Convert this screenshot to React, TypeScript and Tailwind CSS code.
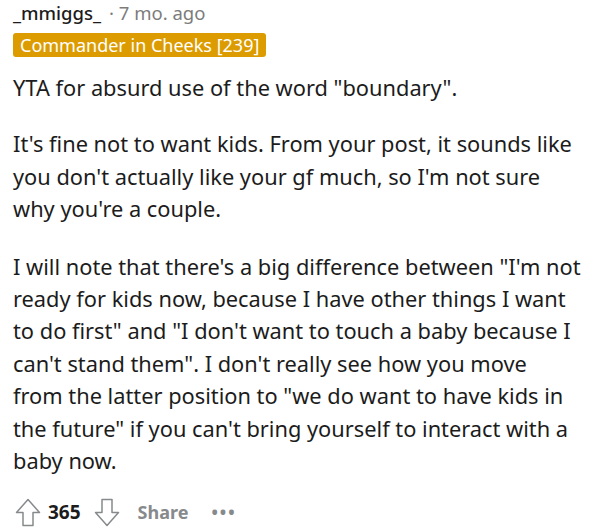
const BODY_FONT = { fontFamily: '"Noto Sans", "Open Sans", sans-serif' };

function ArrowUp() {
  return (
    <svg width="26" height="29" viewBox="0 0 26 29" fill="none">
      <path
        d="M13 1.5 L24.5 14.5 H18 V27.5 H8 V14.5 H1.5 Z"
        stroke="#878a8c"
        strokeWidth="1.5"
        strokeLinejoin="round"
      />
    </svg>
  );
}

function ArrowDown() {
  return (
    <svg width="26" height="29" viewBox="0 0 26 29" fill="none">
      <path
        d="M13 27.5 L24.5 14.5 H18 V1.5 H8 V14.5 H1.5 Z"
        stroke="#878a8c"
        strokeWidth="1.5"
        strokeLinejoin="round"
      />
    </svg>
  );
}

export default function App() {
  return (
    <div className="w-[593px] h-[527px] bg-white overflow-hidden pl-[13px] pr-3" style={BODY_FONT}>
      <div className="flex items-center h-[26px] text-[18.5px] leading-[26px]">
        <span className="text-[#1c1c1c] font-medium">_mmiggs_</span>
        <span className="text-[#7c7c7c] ml-2">· 7 mo. ago</span>
      </div>
      <div className="mt-[7px] flex">
        <span className="bg-[#dc9c00] text-white text-[18px] leading-[24px] h-[24px] px-[7px] rounded-[3px]">
          Commander in Cheeks [239]
        </span>
      </div>
      <div className="text-[#1c1c1c] text-[21.8px] leading-[32.4px] mt-[15px]">
        <p>YTA for absurd use of the word "boundary".</p>
        <p className="mt-[24px]">
          It's fine not to want kids. From your post, it sounds like you don't actually like your gf much, so I'm not sure why you're a couple.
        </p>
        <p className="mt-[25px]">
          I will note that there's a big difference between "I'm not ready for kids now, because I have other things I want to do first" and "I don't want to touch a baby because I can't stand them". I don't really see how you move from the latter position to "we do want to have kids in the future" if you can't bring yourself to interact with a baby now.
        </p>
      </div>
      <div className="flex items-center mt-[20px] h-[30px]">
        <span className="ml-[2px]"><ArrowUp /></span>
        <span className="ml-[7px] text-[19px] font-bold text-[#1c1c1c]">365</span>
        <span className="ml-[13px]"><ArrowDown /></span>
        <span className="ml-[18px] text-[18px] font-bold text-[#878a8c]">Share</span>
        <span className="ml-[23px] text-[17px] font-bold text-[#878a8c] tracking-[2px]">•••</span>
      </div>
    </div>
  );
}
